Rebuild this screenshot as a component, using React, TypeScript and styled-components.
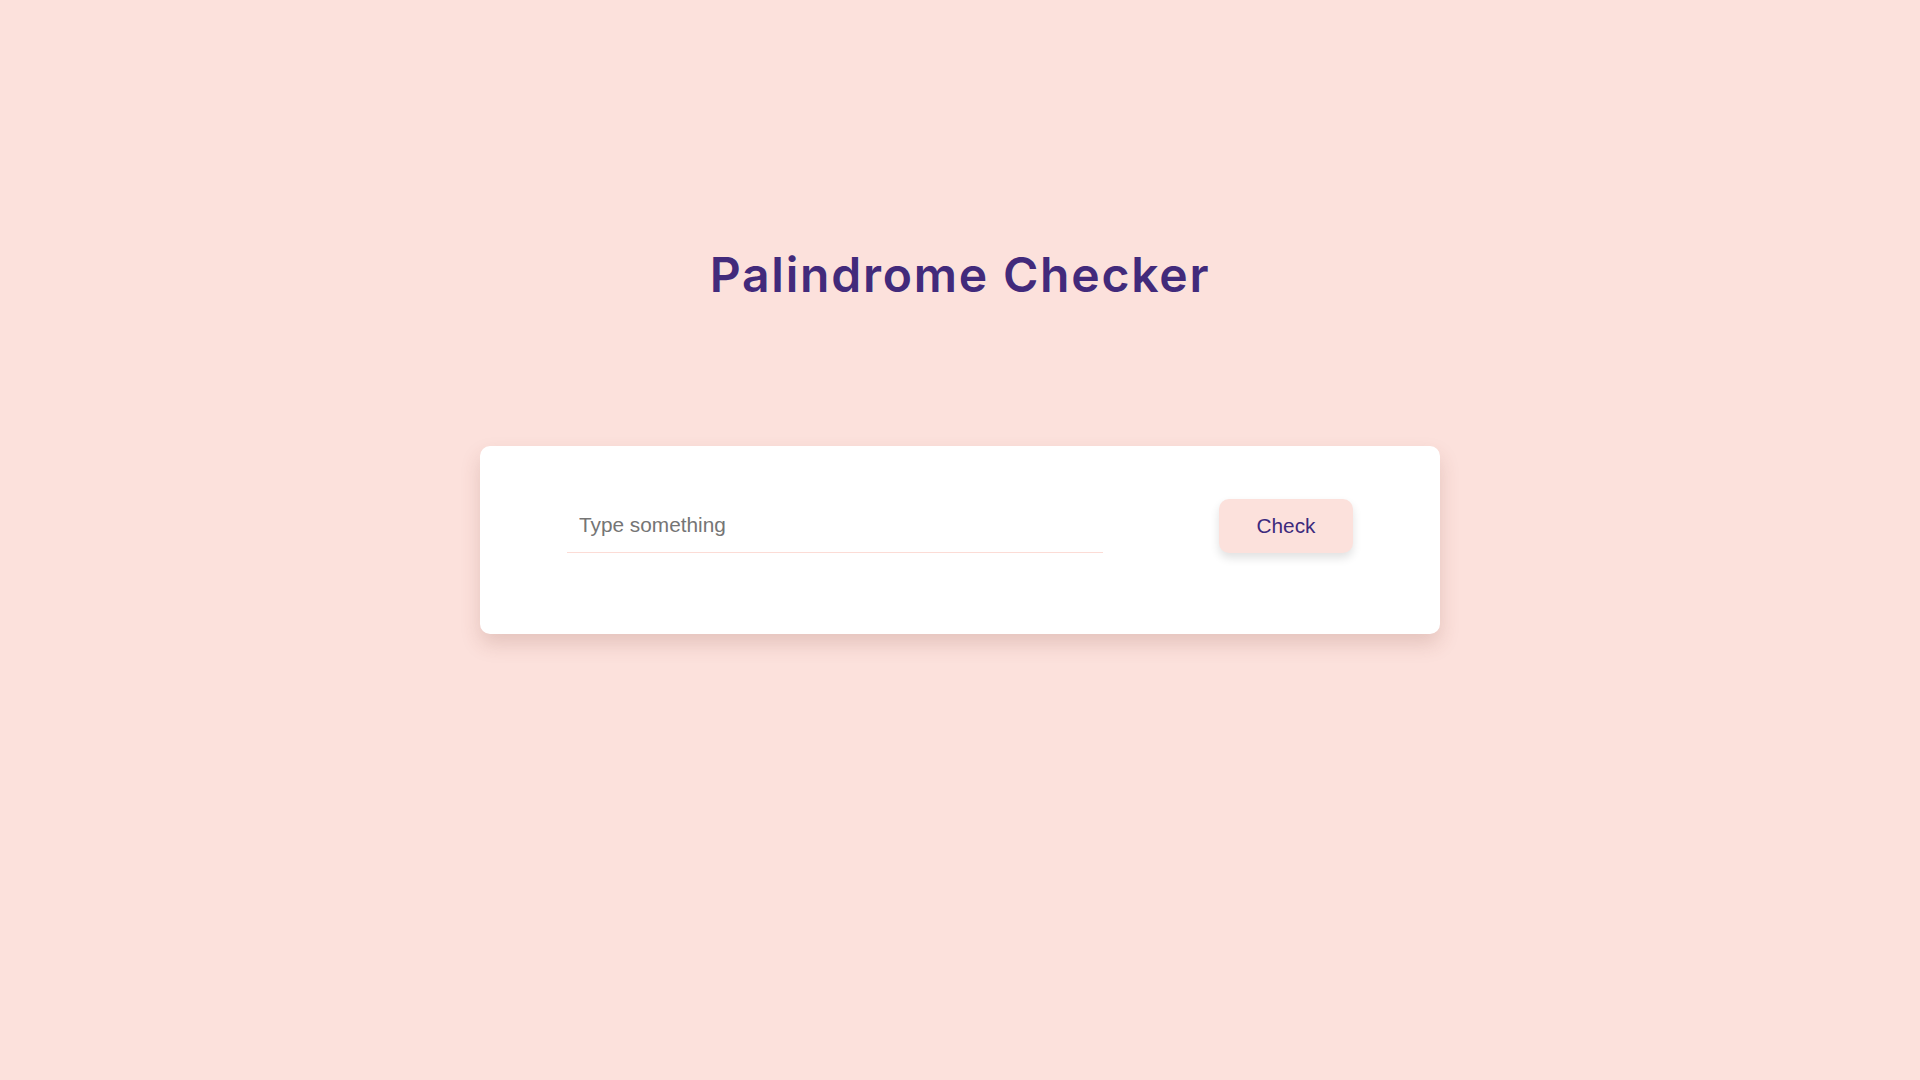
import React, { ReactElement, useState } from 'react'
import styled, { createGlobalStyle } from 'styled-components'

const GlobalStyle = createGlobalStyle`
  html, body {
    margin: 0;
    padding: 0;
    background-color: #fce1dc;
  }
  * {
    box-sizing: border-box;
  }
`

const Page = styled.main`
  min-height: 100vh;
  display: flex;
  flex-direction: column;
  align-items: center;
  padding-top: 243px;
  background-color: #fce1dc;
`

const Title = styled.h1`
  margin: 0;
  font-family: Inter, 'Open Sans', sans-serif;
  font-weight: 600;
  font-size: 48px;
  line-height: 64px;
  letter-spacing: 1.8px;
  color: #422a7b;
`

const Card = styled.section`
  margin-top: 139px;
  width: 960px;
  padding: 52px 87px 81px;
  background-color: #ffffff;
  border-radius: 10px;
  box-shadow: 0 10px 20px rgba(120, 60, 50, 0.18);
`

const Row = styled.div`
  display: flex;
  align-items: center;
  justify-content: space-between;
`

const Input = styled.input`
  width: 536px;
  height: 55px;
  padding: 0 12px;
  border: none;
  border-bottom: 1px solid #fcdcd6;
  outline: none;
  font-family: 'Liberation Sans', Arial, sans-serif;
  font-size: 20.8px;
  color: #333333;
  background: transparent;

  &::placeholder {
    color: #757575;
  }
`

const Button = styled.button`
  width: 134px;
  height: 54px;
  border: none;
  border-radius: 10px;
  background-color: #fce1dc;
  color: #3c2a7d;
  font-family: 'Liberation Sans', Arial, sans-serif;
  font-size: 20.8px;
  cursor: pointer;
  box-shadow: 0 5px 10px rgba(0, 0, 0, 0.12);
`

function App(): ReactElement {
  const [text, setText] = useState('')
  return (<>
    <GlobalStyle />
    <Page>
      <Title>Palindrome Checker</Title>
      <Card>
        <Row>
          <Input
            type="text"
            placeholder="Type something"
            value={text}
            onChange={e => setText(e.target.value)}
          />
          <Button>Check</Button>
        </Row>
      </Card>
    </Page>
  </>)
}

export default App
